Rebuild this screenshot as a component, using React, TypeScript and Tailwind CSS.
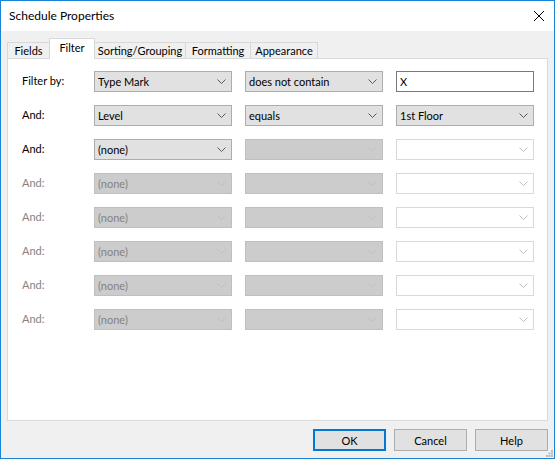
import React from "react";

type Variant = "enabled" | "disabled" | "white";

function Chevron({ color }: { color: string }) {
  return (
    <svg width="9" height="5" viewBox="0 0 9 5" className="shrink-0">
      <polyline points="0.5,0.5 4.5,4.5 8.5,0.5" fill="none" stroke={color} strokeWidth="1" />
    </svg>
  );
}

function Combo({ value, variant }: { value?: string; variant: Variant }) {
  const cls =
    variant === "enabled"
      ? "bg-[#e1e1e1] border-[#adadad] text-black"
      : variant === "disabled"
      ? "bg-[#cccccc] border-[#bfbfbf] text-[#838383]"
      : "bg-white border-[#d9d9d9] text-black";
  const chev = variant === "enabled" ? "#5a5a5a" : "#bfbfbf";
  return (
    <div className={`h-[21px] w-[138px] border flex items-center justify-between pl-[3px] pr-[5px] ${cls}`}>
      <span className="leading-none">{value ?? ""}</span>
      <Chevron color={chev} />
    </div>
  );
}

const tabs = [
  { name: "Fields", w: "w-[43px]" },
  { name: "Filter", w: "w-[46px]", active: true },
  { name: "Sorting/Grouping", w: "w-[92px]" },
  { name: "Formatting", w: "w-[66px]" },
  { name: "Appearance", w: "w-[68px]" },
];

type Row = {
  label: string;
  labelOn: boolean;
  a: { v?: string; t: Variant };
  b: { v?: string; t: Variant };
  c: { v?: string; t: Variant | "text" };
};

const rows: Row[] = [
  { label: "Filter by:", labelOn: true, a: { v: "Type Mark", t: "enabled" }, b: { v: "does not contain", t: "enabled" }, c: { v: "X", t: "text" } },
  { label: "And:", labelOn: true, a: { v: "Level", t: "enabled" }, b: { v: "equals", t: "enabled" }, c: { v: "1st Floor", t: "enabled" } },
  { label: "And:", labelOn: true, a: { v: "(none)", t: "enabled" }, b: { t: "disabled" }, c: { t: "white" } },
  { label: "And:", labelOn: false, a: { v: "(none)", t: "disabled" }, b: { t: "disabled" }, c: { t: "white" } },
  { label: "And:", labelOn: false, a: { v: "(none)", t: "disabled" }, b: { t: "disabled" }, c: { t: "white" } },
  { label: "And:", labelOn: false, a: { v: "(none)", t: "disabled" }, b: { t: "disabled" }, c: { t: "white" } },
  { label: "And:", labelOn: false, a: { v: "(none)", t: "disabled" }, b: { t: "disabled" }, c: { t: "white" } },
  { label: "And:", labelOn: false, a: { v: "(none)", t: "disabled" }, b: { t: "disabled" }, c: { t: "white" } },
];

export default function App() {
  return (
    <div className="relative w-[555px] h-[459px] border border-[#1883d7] bg-[#f0f0f0] flex flex-col font-['Lato',sans-serif] text-[11px] text-black select-none">
      {/* Title bar */}
      <div className="h-[30px] bg-white flex items-center justify-between pl-[8px] pr-[10px]">
        <span className="text-[12px] leading-none">Schedule Properties</span>
        <svg width="10" height="10" viewBox="0 0 10 10">
          <line x1="0" y1="0" x2="10" y2="10" stroke="#000" strokeWidth="1" />
          <line x1="10" y1="0" x2="0" y2="10" stroke="#000" strokeWidth="1" />
        </svg>
      </div>

      {/* Tabs */}
      <div className="h-[27px] flex items-end pl-[6px]">
        {tabs.map((t, i) => (
          <div
            key={t.name}
            className={`${t.w} ${i > 0 ? "-ml-px" : ""} border-t border-l border-r border-[#d9d9d9] flex justify-center ${
              t.active
                ? "relative z-10 h-[21px] -mb-px bg-white pt-[3px]"
                : "h-[16px] bg-[#f0f0f0] pt-[2px]"
            }`}
          >
            <span className="leading-none">{t.name}</span>
          </div>
        ))}
      </div>

      {/* Panel */}
      <div className="mx-[6px] h-[363px] bg-white border border-[#d9d9d9] pt-[12px] pl-[14px]">
        <div className="grid grid-cols-[59px_138px_138px_138px] gap-x-[13px] gap-y-[13px] items-center">
          {rows.map((r, i) => (
            <React.Fragment key={i}>
              <span className={r.labelOn ? "text-black" : "text-[#838383]"}>{r.label}</span>
              <Combo value={r.a.v} variant={r.a.t} />
              <Combo value={r.b.v} variant={r.b.t} />
              {r.c.t === "text" ? (
                <div className="h-[21px] w-[138px] border border-[#7a7a7a] bg-white flex items-center pl-[3px]">
                  <span className="leading-none">{r.c.v}</span>
                </div>
              ) : (
                <Combo value={r.c.v} variant={r.c.t} />
              )}
            </React.Fragment>
          ))}
        </div>
      </div>

      {/* Buttons */}
      <div className="flex justify-end gap-[8px] pr-[6px] pt-[8px]">
        <button className="w-[73px] h-[22px] border-2 border-[#0078d7] bg-[#e1e1e1] flex items-center justify-center leading-none">OK</button>
        <button className="w-[73px] h-[22px] border border-[#adadad] bg-[#e1e1e1] flex items-center justify-center leading-none">Cancel</button>
        <button className="w-[73px] h-[22px] border border-[#adadad] bg-[#e1e1e1] flex items-center justify-center leading-none">Help</button>
      </div>

      {/* Resize grip */}
      <svg className="absolute right-[1px] bottom-[1px]" width="7" height="7" viewBox="0 0 7 7">
        <rect x="5" y="0" width="2" height="2" fill="#bcbcbc" />
        <rect x="2.5" y="2.5" width="2" height="2" fill="#bcbcbc" />
        <rect x="5" y="2.5" width="2" height="2" fill="#bcbcbc" />
        <rect x="0" y="5" width="2" height="2" fill="#bcbcbc" />
        <rect x="2.5" y="5" width="2" height="2" fill="#bcbcbc" />
        <rect x="5" y="5" width="2" height="2" fill="#bcbcbc" />
      </svg>
    </div>
  );
}
